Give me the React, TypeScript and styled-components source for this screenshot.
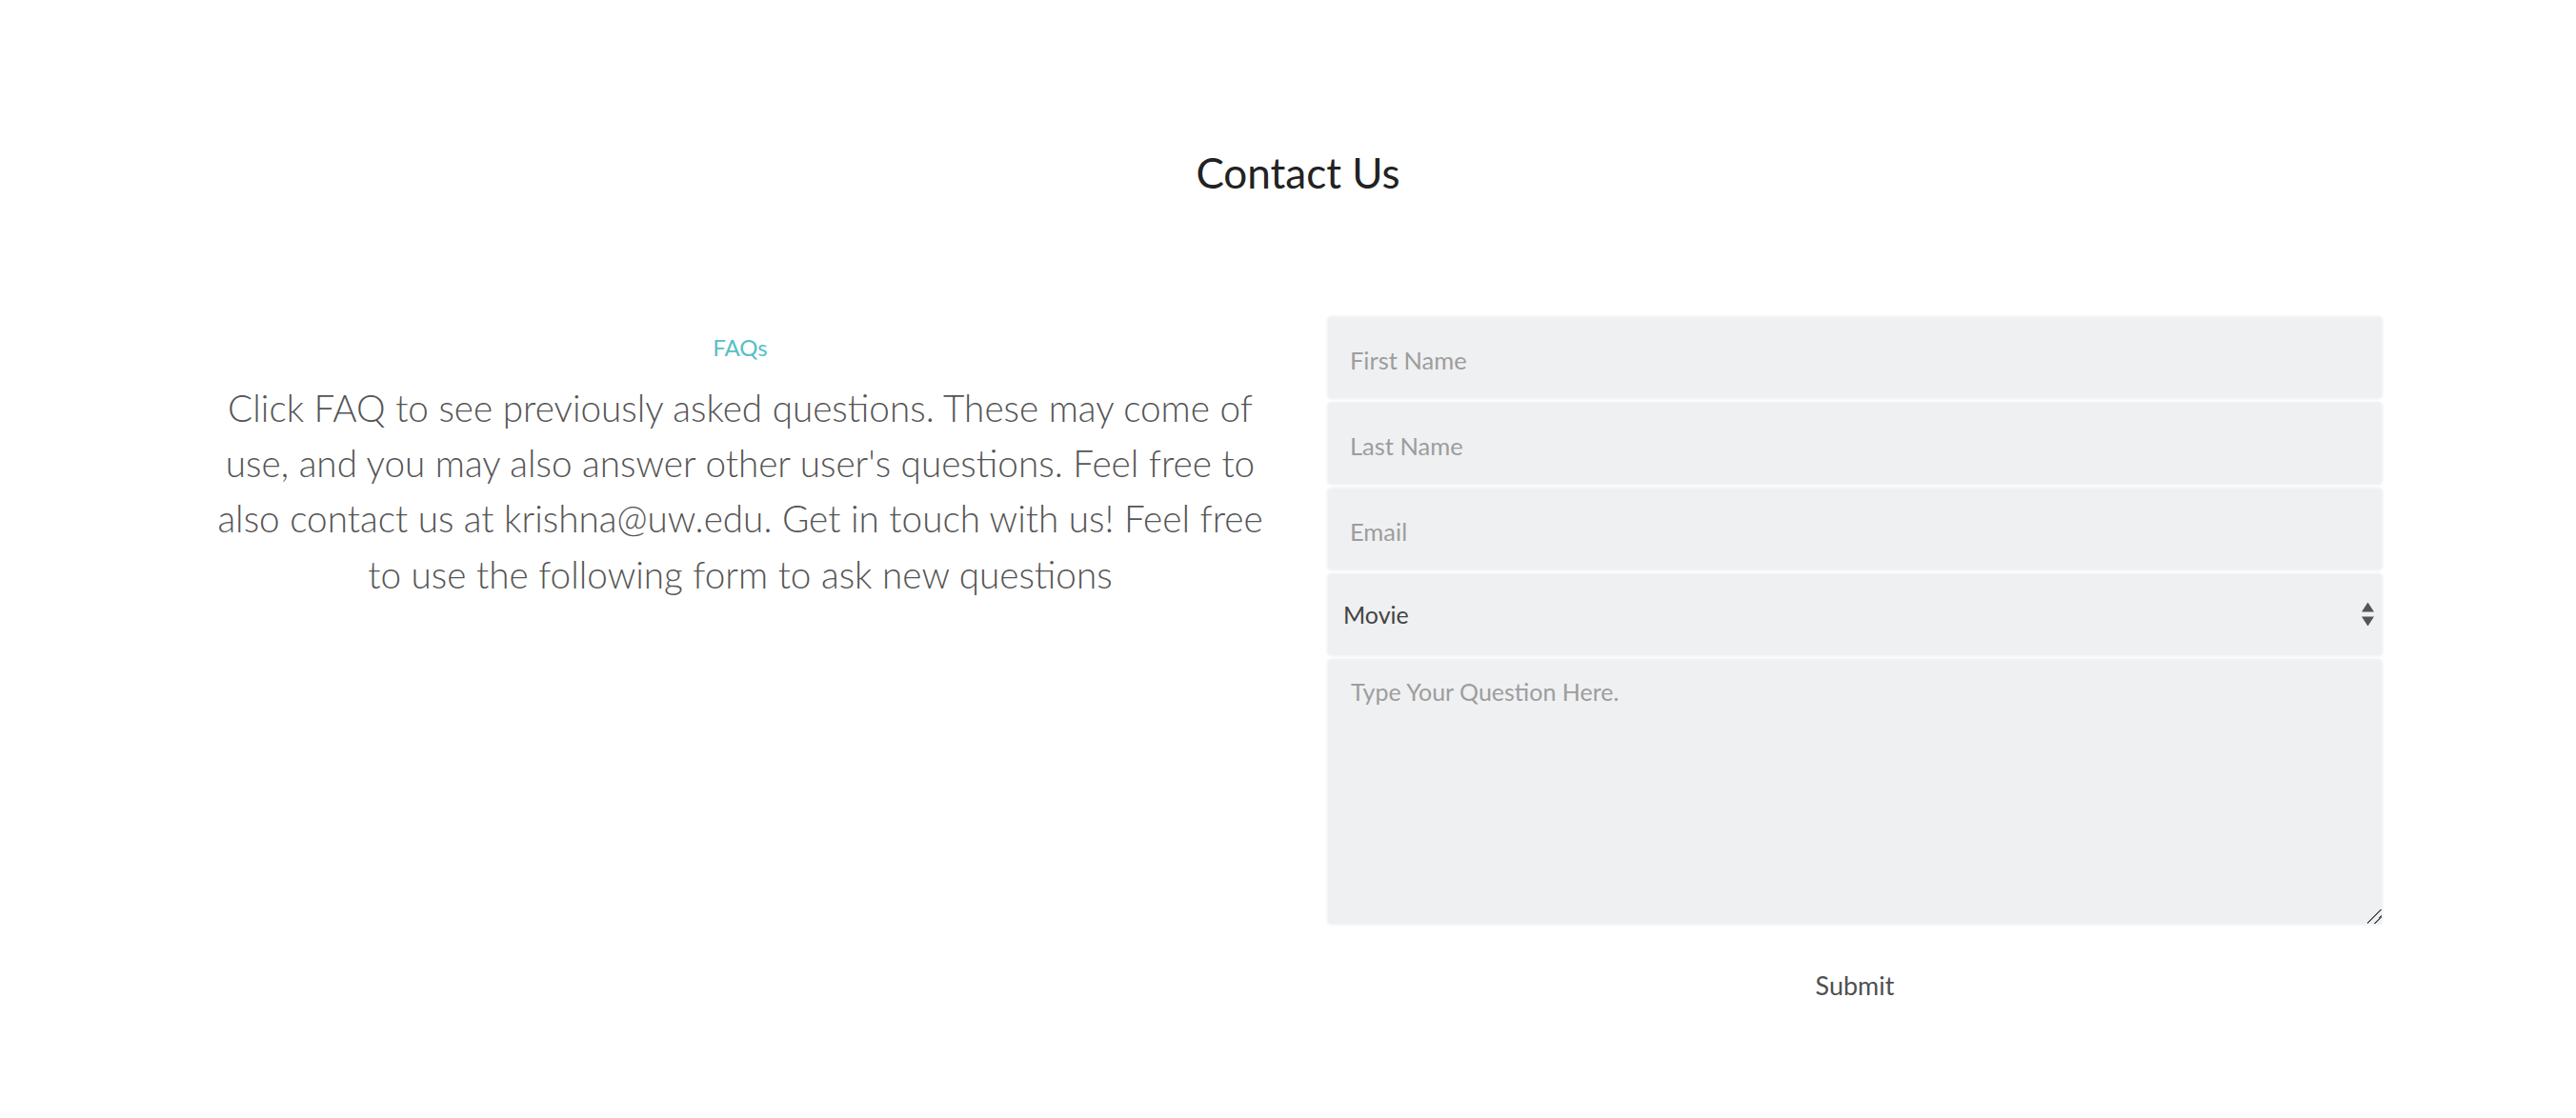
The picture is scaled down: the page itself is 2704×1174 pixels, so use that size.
import React from "react";
import styled, { createGlobalStyle } from "styled-components";

const GlobalStyle = createGlobalStyle`
  html, body {
    margin: 0;
    padding: 0;
    background: #ffffff;
  }
  body {
    font-family: Lato, "Noto Sans", sans-serif;
    color: #555555;
  }
  * { box-sizing: border-box; }
`;

const Page = styled.main`
  padding: 155px 203px 60px 223px;
`;

const Title = styled.h1`
  margin: 0;
  font-family: Lato, "Noto Sans", sans-serif;
  font-weight: 400;
  font-size: 44px;
  line-height: 1.2;
  color: #222222;
  text-align: center;
  width: 2279px;
`;

const Section = styled.section`
  display: grid;
  grid-template-columns: 1108px 1110px;
  column-gap: 61px;
  margin-top: 123px;
  align-items: start;
`;

const InfoColumn = styled.div`
  display: flex;
  flex-direction: column;
  align-items: center;
  text-align: center;
  padding-top: 20px;
`;

const FaqLink = styled.a`
  font-size: 24px;
  line-height: 1.2;
  font-weight: 400;
  color: #56bfc5;
  text-decoration: none;
  cursor: pointer;
`;

const Blurb = styled.p`
  margin: 19px 0 0;
  font-weight: 300;
  font-size: 38.7px;
  line-height: 58.4px;
  color: #555555;
`;

const Form = styled.form`
  display: flex;
  flex-direction: column;
  gap: 1px;
`;

const fieldBase = `
  width: 100%;
  font-family: Lato, "Noto Sans", sans-serif;
  background: #eff0f2;
  border: 2px solid #f5f6f7;
  border-radius: 6px;
  outline: none;
  margin: 0;
`;

const TextField = styled.input`
  ${fieldBase}
  height: 89px;
  padding: 6px 23px 0;
  font-size: 25.5px;
  font-weight: 400;
  color: #444444;
  &::placeholder {
    color: #9d9d9d;
    opacity: 1;
  }
`;

const SelectWrap = styled.div`
  position: relative;
  width: 100%;
`;

const Select = styled.select`
  ${fieldBase}
  appearance: none;
  -webkit-appearance: none;
  height: 89px;
  padding: 0 40px 0 16px;
  font-size: 25px;
  font-weight: 400;
  color: #444444;
`;

const SelectArrows = styled.svg`
  position: absolute;
  right: 10px;
  top: 50%;
  transform: translateY(-50%);
  pointer-events: none;
`;

const QuestionArea = styled.textarea`
  ${fieldBase}
  height: 281px;
  padding: 18px 24px;
  font-size: 25px;
  line-height: 1.2;
  color: #444444;
  resize: vertical;
  &::placeholder {
    color: #9d9d9d;
    opacity: 1;
  }
  &::-webkit-resizer {
    width: 16px;
    height: 16px;
    background:
      linear-gradient(
        135deg,
        transparent 0 44%,
        #555555 44% 52%,
        transparent 52% 70%,
        #555555 70% 78%,
        transparent 78%
      );
  }
`;

const SubmitButton = styled.button`
  align-self: center;
  margin-top: 46px;
  padding: 0;
  border: none;
  background: transparent;
  font-family: Lato, "Noto Sans", sans-serif;
  font-size: 27px;
  line-height: 1.2;
  font-weight: 400;
  color: #505050;
  cursor: pointer;
`;

export default function App() {
  return (
    <>
      <GlobalStyle />
      <Page>
        <Title>Contact Us</Title>
        <Section>
          <InfoColumn>
            <FaqLink href="#faq">FAQs</FaqLink>
            <Blurb>
              Click FAQ to see previously asked questions. These may come of use, and you may also
              answer other user's questions. Feel free to also contact us at krishna@uw.edu. Get in
              touch with us! Feel free to use the following form to ask new questions
            </Blurb>
          </InfoColumn>
          <Form onSubmit={(e) => e.preventDefault()}>
            <TextField type="text" placeholder="First Name" />
            <TextField type="text" placeholder="Last Name" />
            <TextField type="email" placeholder="Email" />
            <SelectWrap>
              <Select defaultValue="Movie">
                <option>Movie</option>
                <option>TV Show</option>
                <option>Other</option>
              </Select>
              <SelectArrows width="13" height="25" viewBox="0 0 13 25" aria-hidden="true">
                <path d="M6.5 0 L13 10 L0 10 Z" fill="#555555" />
                <path d="M0 15 L13 15 L6.5 25 Z" fill="#555555" />
              </SelectArrows>
            </SelectWrap>
            <QuestionArea placeholder="Type Your Question Here." />
            <SubmitButton type="submit">Submit</SubmitButton>
          </Form>
        </Section>
      </Page>
    </>
  );
}
